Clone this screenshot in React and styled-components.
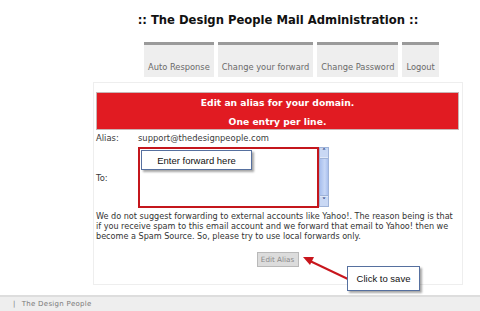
import React from "react";
import styled, { createGlobalStyle } from "styled-components";

const GlobalStyle = createGlobalStyle`
  html, body {
    margin: 0;
    padding: 0;
    background: #ffffff;
  }
  body {
    font-family: "DejaVu Sans", Verdana, sans-serif;
  }
`;

const tabs = ["Auto Response", "Change your forward", "Change Password", "Logout"];

const App = () => {
  return (
    <Page>
      <GlobalStyle />
      <Main>
        <Title>:: The Design People Mail Administration ::</Title>
        <TabBar>
          {tabs.map((t) => (
            <Tab key={t}>{t}</Tab>
          ))}
        </TabBar>
        <Panel>
          <Banner>
            <div>Edit an alias for your domain.</div>
            <div>One entry per line.</div>
          </Banner>
          <FormGrid>
            <Label>Alias:</Label>
            <Value>support@thedesignpeople.com</Value>
            <Label>To:</Label>
            <Field>
              <AreaBox>
                <Callout $top={1} $left={1} $width={111} $height={20}>
                  Enter forward here
                </Callout>
              </AreaBox>
              <ScrollBar>
                <Arrow>&#708;</Arrow>
                <Thumb />
                <Arrow>&#709;</Arrow>
              </ScrollBar>
            </Field>
          </FormGrid>
          <Note>
            We do not suggest forwarding to external accounts like Yahoo!. The reason being is that
            <br />
            if you receive spam to this email account and we forward that email to Yahoo! then we
            <br />
            become a Spam Source. So, please try to use local forwards only.
          </Note>
          <ButtonRow>
            <Button type="button">Edit Alias</Button>
          </ButtonRow>
        </Panel>
      </Main>
      <Footer>
        <span>|</span>
        <span>The Design People</span>
      </Footer>

      <Pointer width="50" height="26" viewBox="0 0 50 26">
        <line x1="48" y1="24" x2="8" y2="5" stroke="#c8161d" strokeWidth="2" />
        <polygon points="1,1 12,1 8,9" fill="#c8161d" />
      </Pointer>
      <FloatCallout>Click to save</FloatCallout>
    </Page>
  );
};

const Page = styled.div`
  position: relative;
  width: 480px;
  height: 311px;
  display: flex;
  flex-direction: column;
  overflow: hidden;
`;

const Main = styled.div`
  flex: 1;
  width: 370px;
  margin-left: 93px;
`;

const Title = styled.div`
  padding-top: 12px;
  text-align: center;
  font-size: 11.6px;
  font-weight: bold;
  line-height: 16px;
  color: #111;
`;

const TabBar = styled.div`
  display: flex;
  gap: 4px;
  margin-top: 14px;
  padding-left: 51px;
`;

const Tab = styled.div`
  height: 27px;
  border-top: 3px solid #9a9a9a;
  background: #eeeeee;
  padding: 0 4px 5px;
  display: flex;
  align-items: flex-end;
  font-size: 8.3px;
  color: #6a6a6a;
  white-space: nowrap;
`;

const Panel = styled.div`
  margin-top: 5px;
  height: 203px;
  box-sizing: border-box;
  border: 1px solid #eeeeee;
  padding: 9px 3px 0 2px;
`;

const Banner = styled.div`
  height: 38px;
  box-sizing: border-box;
  background: #e11b22;
  border: 1px solid #c9b5b5;
  color: #ffffff;
  font-weight: bold;
  font-size: 9.2px;
  text-align: center;
  line-height: 19px;
`;

const FormGrid = styled.div`
  display: grid;
  grid-template-columns: 42px 1fr;
  row-gap: 3px;
  align-items: center;
  margin-top: 2px;
  font-size: 8.4px;
  color: #3a3a3a;
`;

const Label = styled.div`
  line-height: 12px;
`;

const Value = styled.div`
  line-height: 12px;
`;

const Field = styled.div`
  display: flex;
  height: 61px;
`;

const AreaBox = styled.div`
  position: relative;
  width: 181px;
  height: 61px;
  box-sizing: border-box;
  border: 2px solid #c4161c;
  background: #fff;
`;

const ScrollBar = styled.div`
  width: 10px;
  height: 60px;
  display: flex;
  flex-direction: column;
  background: #dfe8f8;
  border: 1px solid #9fb3d8;
  box-sizing: border-box;
`;

const Arrow = styled.div`
  height: 9px;
  font-size: 8px;
  font-weight: bold;
  line-height: 10px;
  text-align: center;
  color: #2f4c86;
  background: #c9d8f4;
`;

const Thumb = styled.div`
  flex: 1;
  margin: 1px 0;
  border-top: 1px solid #9fb3d8;
  border-bottom: 1px solid #9fb3d8;
  background: linear-gradient(90deg, #a9c0ee, #c7d7f6 60%, #a9c0ee);
`;

const Callout = styled.div`
  position: absolute;
  top: ${(p) => p.$top}px;
  left: ${(p) => p.$left}px;
  width: ${(p) => p.$width}px;
  height: ${(p) => p.$height}px;
  box-sizing: border-box;
  background: #fff;
  border: 1.5px solid #56709f;
  box-shadow: 2px 2px 2px rgba(0, 0, 0, 0.35);
  font-family: "Liberation Sans", Arial, sans-serif;
  font-size: 9.5px;
  color: #111;
  display: flex;
  align-items: center;
  justify-content: center;
`;

const Note = styled.p`
  margin: 3px 0 0;
  font-size: 8.1px;
  line-height: 10px;
  color: #333;
  white-space: nowrap;
`;

const ButtonRow = styled.div`
  display: flex;
  justify-content: center;
  margin-top: 11px;
`;

const Button = styled.button`
  width: 42px;
  height: 15px;
  padding: 0;
  background: #dcdcdc;
  border: 1px solid #b9b9b9;
  font-family: "DejaVu Sans", Verdana, sans-serif;
  font-size: 7.2px;
  color: #8a8a8a;
`;

const Footer = styled.div`
  height: 14px;
  border-top: 2px solid #dddddd;
  background: #eeeeee;
  display: flex;
  align-items: center;
  gap: 6px;
  padding-left: 13px;
  font-size: 7px;
  letter-spacing: 0.3px;
  color: #7a7a7a;
`;

const Pointer = styled.svg`
  position: absolute;
  left: 302px;
  top: 256px;
`;

const FloatCallout = styled.div`
  position: absolute;
  left: 347px;
  top: 266px;
  width: 73px;
  height: 25px;
  box-sizing: border-box;
  background: #fff;
  border: 1.5px solid #56709f;
  box-shadow: 2px 2px 2px rgba(0, 0, 0, 0.35);
  font-family: "Liberation Sans", Arial, sans-serif;
  font-size: 9.5px;
  color: #111;
  display: flex;
  align-items: center;
  justify-content: center;
`;

export default App;
